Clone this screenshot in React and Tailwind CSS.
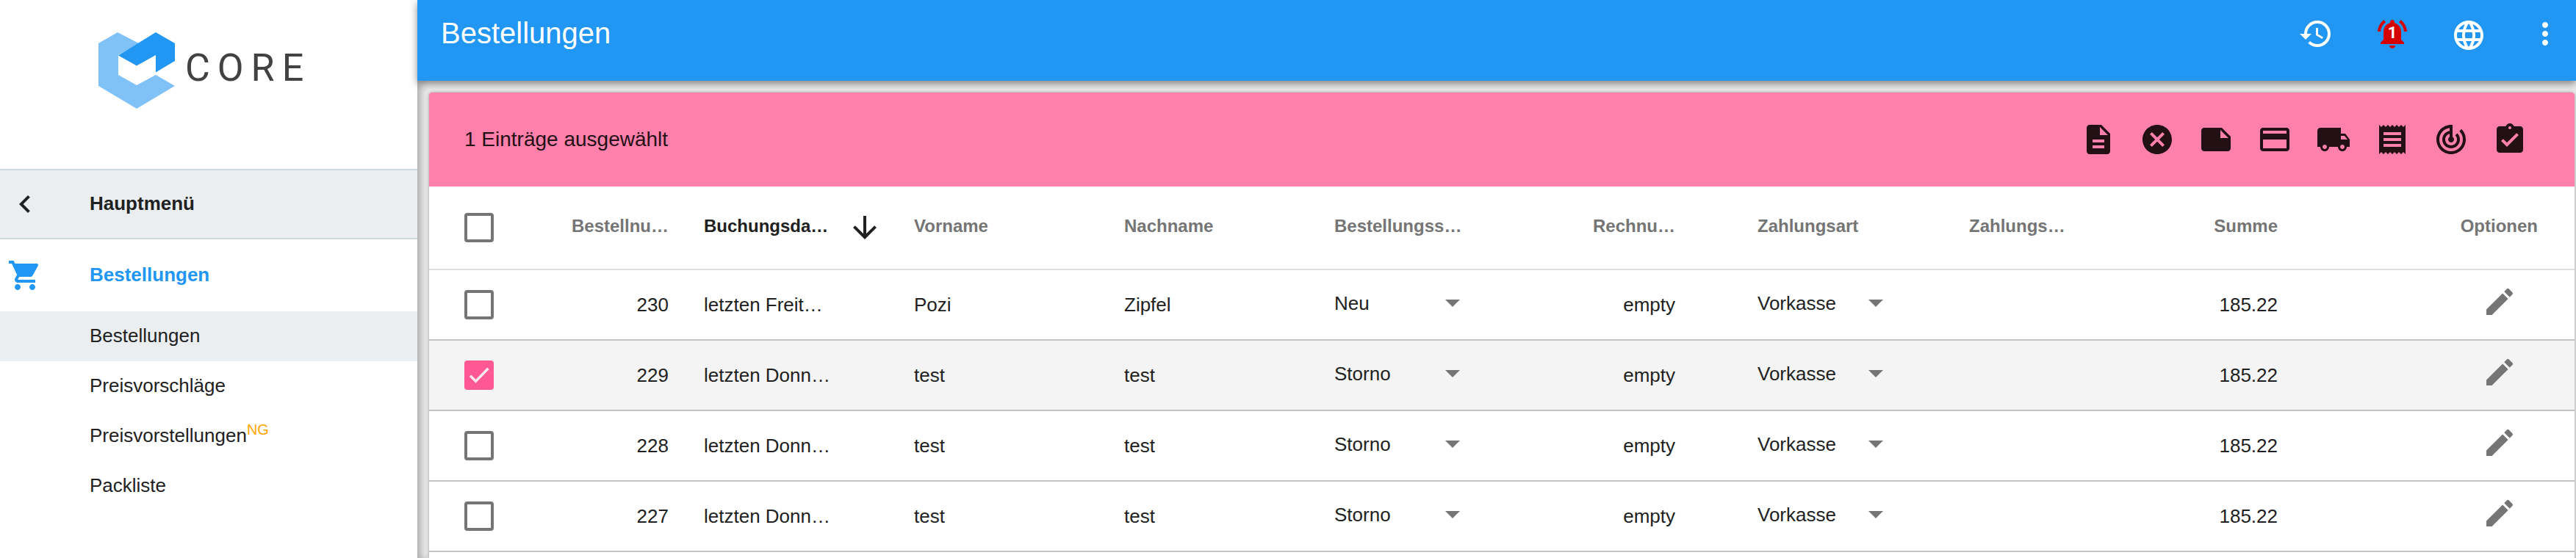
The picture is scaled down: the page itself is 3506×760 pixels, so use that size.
import React from "react";
import {
  MdHistory,
  MdNotificationsActive,
  MdLanguage,
  MdMoreVert,
  MdDescription,
  MdCancel,
  MdNote,
  MdPayment,
  MdLocalShipping,
  MdReceipt,
  MdTrackChanges,
  MdAssignmentTurnedIn,
  MdChevronLeft,
  MdShoppingCart,
  MdArrowDownward,
  MdEdit,
} from "react-icons/md";

const menu = [
  { label: "Bestellungen", active: true },
  { label: "Preisvorschläge" },
  { label: "Preisvorstellungen", tag: "NG" },
  { label: "Packliste" },
];

const bulkActions = [
  { label: "Beleg", Icon: MdDescription },
  { label: "Stornieren", Icon: MdCancel },
  { label: "Notiz", Icon: MdNote },
  { label: "Zahlung", Icon: MdPayment },
  { label: "Versand", Icon: MdLocalShipping },
  { label: "Rechnung", Icon: MdReceipt },
  { label: "Verfolgen", Icon: MdTrackChanges },
  { label: "Abschließen", Icon: MdAssignmentTurnedIn },
];

const orders = [
  { id: 230, date: "letzten Freit…", first: "Pozi", last: "Zipfel", status: "Neu" },
  { id: 229, date: "letzten Donn…", first: "test", last: "test", status: "Storno", checked: true },
  { id: 228, date: "letzten Donn…", first: "test", last: "test", status: "Storno" },
  { id: 227, date: "letzten Donn…", first: "test", last: "test", status: "Storno" },
];

function Logo() {
  return (
    <a href="#start" className="flex h-[230px] items-start pt-11 pl-[134px]">
      <svg viewBox="0 0 104 104" className="h-[104px] w-[104px] shrink-0" aria-hidden="true">
        <path fill="#80c2f8" d="M26 0 0 15v58l52 31 52-31-26-15-26 14-25-14V31l28-16z" />
        <path fill="#2196f3" d="M78 0l26 15v24L78 54.500V31L52 45.500 27 31.500z" />
      </svg>
      <span className="pt-[18px] pl-3.5 font-[Roboto,sans-serif] text-[52px] leading-[62px] tracking-[10px] text-[#424242]">
        CORE
      </span>
    </a>
  );
}

function Sidebar() {
  return (
    <nav className="w-[568px] shrink-0 bg-white text-[26px] leading-8 text-[#212121]">
      <Logo />
      <a
        href="#menu"
        className="flex h-24 items-center border-y-2 border-[#cfd8dc] bg-[#eaeef1] pl-2.5 font-bold"
      >
        <MdChevronLeft className="size-12" />
        <span className="pb-0.5 pl-16">Hauptmenü</span>
      </a>
      <a href="#shop" className="flex h-[98px] items-center pl-2.5 font-bold text-[#2196f3]">
        <MdShoppingCart className="size-12" />
        <span className="pb-0.5 pl-16">Bestellungen</span>
      </a>
      <ul>
        {menu.map((m) => (
          <li key={m.label}>
            <a
              href="#item"
              className={
                m.active
                  ? "flex h-[68px] items-center bg-[#eaeef1] pb-0.5 pl-[122px]"
                  : "flex h-[68px] items-center pb-0.5 pl-[122px]"
              }
            >
              <span>
                {m.label}
                {m.tag && <sup className="text-[20px] text-[#ffa500]">{m.tag}</sup>}
              </span>
            </a>
          </li>
        ))}
      </ul>
    </nav>
  );
}

function TopBar() {
  return (
    <header className="z-10 flex h-[110px] shrink-0 items-start justify-between bg-[#2196f3] pt-[22px] pr-[18px] pl-8 text-white shadow-[0_4px_10px_rgba(0,0,0,0.45)]">
      <h1 className="text-[40px] leading-[46px]">Bestellungen</h1>
      <div className="flex items-start gap-14">
        <button aria-label="Verlauf">
          <MdHistory className="size-12" />
        </button>
        <button aria-label="Benachrichtigungen" className="relative">
          <MdNotificationsActive className="size-12 text-[#d50000]" />
          <span className="absolute inset-0 text-center font-[Roboto,sans-serif] text-[22px] leading-[46px] font-bold">
            1
          </span>
        </button>
        <button aria-label="Sprache" className="pt-0.5">
          <MdLanguage className="size-12" />
        </button>
        <button aria-label="Mehr">
          <MdMoreVert className="size-12" />
        </button>
      </div>
    </header>
  );
}

function Check({ label, checked }) {
  return (
    <label className="grid size-10">
      <input
        type="checkbox"
        aria-label={label}
        defaultChecked={checked}
        className="peer size-10 appearance-none rounded-sm border-4 border-[#757575] [grid-area:1/1] checked:border-[#ff5892] checked:bg-[#ff5892]"
      />
      <svg
        viewBox="0 0 24 24"
        className="pointer-events-none hidden size-10 [grid-area:1/1] peer-checked:block"
        aria-hidden="true"
      >
        <path fill="none" stroke="#fde8ef" strokeWidth="2.100" d="M4.800 12.500 9.300 17 19.500 6.500" />
      </svg>
    </label>
  );
}

function Picker({ label, value, options }) {
  return (
    <label className="grid w-[171px] items-center">
      <select
        aria-label={label}
        defaultValue={value}
        className="h-9 w-full appearance-none bg-transparent [grid-area:1/1]"
      >
        {options.map((o) => (
          <option key={o}>{o}</option>
        ))}
      </select>
      <svg
        viewBox="0 0 20 10"
        className="pointer-events-none h-2.5 w-5 justify-self-end fill-[#757575] [grid-area:1/1]"
        aria-hidden="true"
      >
        <path d="M0 0h20L10 10z" />
      </svg>
    </label>
  );
}

function OrdersTable() {
  return (
    <table className="w-full table-fixed text-left text-[26px] leading-8 text-[#212121]">
      <colgroup>
        <col className="w-[132px]" />
        <col className="w-[242px]" />
        <col className="w-[286px]" />
        <col className="w-[286px]" />
        <col className="w-[286px]" />
        <col className="w-[286px]" />
        <col className="w-[290px]" />
        <col className="w-[288px]" />
        <col className="w-[286px]" />
        <col className="w-[186px]" />
        <col />
      </colgroup>
      <thead>
        <tr className="h-[113px] border-b-2 border-[#e0e0e0] text-[24px] text-[#757575]">
          <th className="pl-12">
            <Check label="Alle auswählen" />
          </th>
          <th className="pr-12 pb-1 text-right">Bestellnu…</th>
          <th className="text-[#212121]" aria-sort="descending">
            <button className="flex items-center gap-[26px]">
              <span className="pb-1">Buchungsda…</span>
              <MdArrowDownward className="size-12" />
            </button>
          </th>
          <th className="pb-1">Vorname</th>
          <th className="pb-1">Nachname</th>
          <th className="pb-1">Bestellungss…</th>
          <th className="pr-28 pb-1 text-right">Rechnu…</th>
          <th className="pb-1">Zahlungsart</th>
          <th className="pb-1">Zahlungs…</th>
          <th className="pr-[52px] pb-1 text-right">Summe</th>
          <th className="pr-[50px] pb-1 text-right">Optionen</th>
        </tr>
      </thead>
      <tbody>
        {orders.map((o) => (
          <tr
            key={o.id}
            className={
              o.checked
                ? "h-24 border-b-2 border-[#c4c4c4] bg-[#f4f4f4]"
                : "h-24 border-b-2 border-[#c4c4c4]"
            }
          >
            <td className="pl-12">
              <Check label={"Bestellung " + o.id} checked={o.checked} />
            </td>
            <td className="pr-12 text-right">{o.id}</td>
            <td>{o.date}</td>
            <td>{o.first}</td>
            <td>{o.last}</td>
            <td className="pb-1">
              <Picker label="Bestellungsstatus" value={o.status} options={["Neu", "Storno"]} />
            </td>
            <td className="pr-28 text-right">empty</td>
            <td className="pb-1">
              <Picker label="Zahlungsart" value="Vorkasse" options={["Vorkasse"]} />
            </td>
            <td />
            <td className="pr-[52px] text-right">185.22</td>
            <td className="pr-[78px] pb-2">
              <button aria-label="Bearbeiten" className="ml-auto block text-[#757575]">
                <MdEdit className="size-12" />
              </button>
            </td>
          </tr>
        ))}
      </tbody>
    </table>
  );
}

export default function App() {
  return (
    <div className="flex h-screen overflow-hidden bg-[#ebebeb] font-['Liberation_Sans',Arial,sans-serif]">
      <Sidebar />
      <div className="flex min-w-0 grow flex-col shadow-[inset_8px_0_12px_-4px_rgba(0,0,0,0.3)]">
        <TopBar />
        <main className="grow pt-4 pr-0.5 pl-4">
          <section className="h-full overflow-hidden rounded-t-sm bg-white shadow-[0_0_4px_rgba(0,0,0,0.35)]">
            <div className="flex h-32 items-center justify-between bg-[#ff80ab] pr-16 pl-12 text-[#231015]">
              <h2 className="text-[28px] leading-8">1 Einträge ausgewählt</h2>
              <div className="flex gap-8">
                {bulkActions.map(({ label, Icon }) => (
                  <button key={label} aria-label={label}>
                    <Icon className="size-12" />
                  </button>
                ))}
              </div>
            </div>
            <OrdersTable />
          </section>
        </main>
      </div>
    </div>
  );
}
